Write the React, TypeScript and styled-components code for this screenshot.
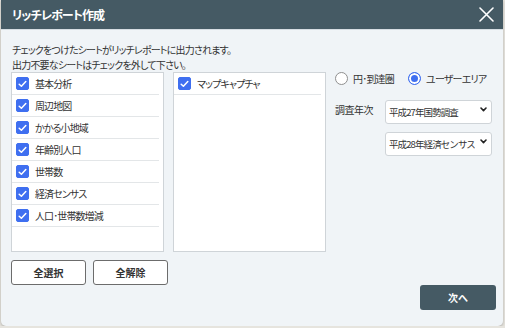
import React, { useState } from "react";
import styled, { createGlobalStyle } from "styled-components";

const leftSheets = [
	"基本分析",
	"周辺地図",
	"かかる小地域",
	"年齢別人口",
	"世帯数",
	"経済センサス",
	"人口･世帯数増減",
];

const rightSheets = ["マップキャプチャ"];

const GlobalStyle = createGlobalStyle`
	html, body {
		margin: 0;
		padding: 0;
		background: #e6e4de;
	}
	body {
		font-family: "Noto Sans CJK JP", "Noto Sans", sans-serif;
		color: #333;
	}
	* {
		box-sizing: border-box;
	}
`;

const CheckBox = ({ checked }: { checked: boolean }) => (
	<Box $checked={checked}>
		{checked && (
			<svg width="9" height="8" viewBox="0 0 9 8">
				<path
					d="M1.2 4.2 L3.4 6.3 L7.8 1.5"
					fill="none"
					stroke="#fff"
					strokeWidth="1.5"
					strokeLinecap="round"
					strokeLinejoin="round"
				/>
			</svg>
		)}
	</Box>
);

const SheetList = ({
	items,
	checked,
	onToggle,
}: {
	items: string[];
	checked: Record<string, boolean>;
	onToggle: (name: string) => void;
}) => (
	<ListBox>
		{items.map((name) => (
			<Item key={name} onClick={() => onToggle(name)}>
				<CheckBox checked={!!checked[name]} />
				<ItemLabel>{name}</ItemLabel>
			</Item>
		))}
	</ListBox>
);

const App = () => {
	const all = [...leftSheets, ...rightSheets];
	const [checked, setChecked] = useState<Record<string, boolean>>(
		Object.fromEntries(all.map((n) => [n, true])),
	);
	const [area, setArea] = useState("user");

	const toggle = (name: string) =>
		setChecked({ ...checked, [name]: !checked[name] });
	const setAll = (value: boolean) =>
		setChecked(Object.fromEntries(all.map((n) => [n, value])));

	return (
		<>
			<GlobalStyle />
			<Dialog>
				<Header>
					<Title>リッチレポート作成</Title>
					<CloseButton aria-label="close">
						<svg width="15" height="15" viewBox="0 0 15 15">
							<path
								d="M1 1 L14 14 M14 1 L1 14"
								stroke="#fff"
								strokeWidth="1.6"
								strokeLinecap="round"
							/>
						</svg>
					</CloseButton>
				</Header>
				<Body>
					<Intro>
						チェックをつけたシートがリッチレポートに出力されます。
						<br />
						出力不要なシートはチェックを外して下さい。
					</Intro>
					<Main>
						<SheetList items={leftSheets} checked={checked} onToggle={toggle} />
						<SheetList items={rightSheets} checked={checked} onToggle={toggle} />
						<Options>
							<RadioRow>
								<RadioLabel onClick={() => setArea("circle")}>
									<Radio $checked={area === "circle"} />
									円･到達圏
								</RadioLabel>
								<RadioLabel onClick={() => setArea("user")}>
									<Radio $checked={area === "user"} />
									ユーザーエリア
								</RadioLabel>
							</RadioRow>
							<YearGrid>
								<YearLabel>調査年次</YearLabel>
								<SelectWrap>
									<Select defaultValue="h27">
										<option value="h27">平成27年国勢調査</option>
										<option value="h22">平成22年国勢調査</option>
									</Select>
									<Chevron />
								</SelectWrap>
								<span />
								<SelectWrap>
									<Select defaultValue="h28">
										<option value="h28">平成28年経済センサス</option>
										<option value="h24">平成24年経済センサス</option>
									</Select>
									<Chevron />
								</SelectWrap>
							</YearGrid>
						</Options>
					</Main>
					<Footer>
						<ButtonGroup>
							<OutlineButton onClick={() => setAll(true)}>全選択</OutlineButton>
							<OutlineButton onClick={() => setAll(false)}>全解除</OutlineButton>
						</ButtonGroup>
						<NextButton>次へ</NextButton>
					</Footer>
				</Body>
			</Dialog>
		</>
	);
};

const Chevron = () => (
	<ChevronIcon width="7" height="5" viewBox="0 0 7 5">
		<path
			d="M1 1 L3.5 3.6 L6 1"
			fill="none"
			stroke="#222"
			strokeWidth="1.6"
			strokeLinecap="round"
			strokeLinejoin="round"
		/>
	</ChevronIcon>
);

export default App;

const Dialog = styled.div`
	width: 502px;
	height: 326px;
	margin-left: 1px;
	display: flex;
	flex-direction: column;
	background: #f0f4f7;
	border-radius: 0 0 5px 5px;
	overflow: hidden;
	box-shadow: 0 1px 3px rgba(0, 0, 0, 0.25);
`;

const Header = styled.div`
	height: 30px;
	flex: none;
	display: flex;
	align-items: center;
	justify-content: space-between;
	padding: 0 5px 0 11px;
	background: #455a64;
	border-bottom: 1px solid #d6dde2;
`;

const Title = styled.div`
	color: #fff;
	font-size: 12px;
	font-weight: bold;
	font-feature-settings: "palt";
	letter-spacing: -0.9px;
`;

const CloseButton = styled.button`
	border: none;
	background: none;
	padding: 0;
	width: 24px;
	height: 24px;
	display: flex;
	align-items: center;
	justify-content: center;
	cursor: pointer;
`;

const Body = styled.div`
	flex: 1;
	display: flex;
	flex-direction: column;
	padding: 12px 7px 15px 10px;
`;

const Intro = styled.div`
	font-size: 10px;
	line-height: 15px;
	padding-left: 1px;
	color: #333;
	font-feature-settings: "palt";
	letter-spacing: -0.8px;
`;

const Main = styled.div`
	display: flex;
	gap: 9px;
`;

const ListBox = styled.div`
	width: 153px;
	height: 180px;
	flex: none;
	background: #fff;
	border: 1px solid #cfd4d8;
	padding-right: 4px;
	overflow: hidden;
`;

const Item = styled.div`
	height: 22px;
	display: flex;
	align-items: center;
	gap: 6px;
	padding-left: 4px;
	border-bottom: 1px solid #e3e6e8;
	cursor: pointer;
`;

const Box = styled.span<{ $checked: boolean }>`
	width: 13px;
	height: 13px;
	flex: none;
	border-radius: 2px;
	display: flex;
	align-items: center;
	justify-content: center;
	background: ${(p) => (p.$checked ? "#3f6ff0" : "#fff")};
	border: 1px solid ${(p) => (p.$checked ? "#3f6ff0" : "#8a8a8a")};
`;

const ItemLabel = styled.span`
	font-size: 10px;
	color: #333;
	font-feature-settings: "palt";
	letter-spacing: -0.9px;
`;

const Options = styled.div`
	flex: 1;
	display: flex;
	flex-direction: column;
`;

const RadioRow = styled.div`
	display: flex;
	gap: 14px;
	height: 14px;
	align-items: center;
	margin-top: -1px;
`;

const RadioLabel = styled.label`
	display: flex;
	align-items: center;
	gap: 5px;
	font-size: 10px;
	color: #333;
	cursor: pointer;
	font-feature-settings: "palt";
	letter-spacing: -0.8px;
`;

const Radio = styled.span<{ $checked: boolean }>`
	width: 13px;
	height: 13px;
	border-radius: 50%;
	flex: none;
	border: 1px solid ${(p) => (p.$checked ? "#3f6ff0" : "#8f8f8f")};
	box-shadow: ${(p) => (p.$checked ? "inset 0 0 0 2px #fff" : "none")};
	background: ${(p) => (p.$checked ? "#3f6ff0" : "#fff")};
`;

const YearGrid = styled.div`
	display: grid;
	grid-template-columns: 50px 107px;
	row-gap: 8px;
	align-items: center;
	margin-top: 12px;
`;

const YearLabel = styled.span`
	font-size: 10px;
	color: #333;
	letter-spacing: -0.5px;
`;

const SelectWrap = styled.div`
	position: relative;
	height: 24px;
`;

const Select = styled.select`
	appearance: none;
	width: 100%;
	height: 24px;
	padding: 0 16px 0 3px;
	border: 1px solid #cfd4d8;
	border-radius: 3px;
	background: #fff;
	font-family: "Noto Sans CJK JP", "Noto Sans", sans-serif;
	font-size: 9.5px;
	letter-spacing: -0.9px;
	color: #333;
	outline: none;
`;

const ChevronIcon = styled.svg`
	position: absolute;
	right: 5px;
	top: 10px;
	pointer-events: none;
`;

const Footer = styled.div`
	display: flex;
	justify-content: space-between;
	margin-top: 8px;
`;

const ButtonGroup = styled.div`
	display: flex;
	gap: 7px;
	align-self: flex-start;
`;

const OutlineButton = styled.button`
	width: 75px;
	height: 25px;
	background: #fff;
	border: 1px solid #6c6c6c;
	border-radius: 3px;
	font-family: "Noto Sans CJK JP", "Noto Sans", sans-serif;
	font-size: 10px;
	font-weight: bold;
	color: #333;
	cursor: pointer;
`;

const NextButton = styled.button`
	width: 76px;
	height: 25px;
	margin-top: 25px;
	background: #455a64;
	border: none;
	border-radius: 3px;
	font-family: "Noto Sans CJK JP", "Noto Sans", sans-serif;
	font-size: 10px;
	font-weight: bold;
	color: #fff;
	cursor: pointer;
`;
